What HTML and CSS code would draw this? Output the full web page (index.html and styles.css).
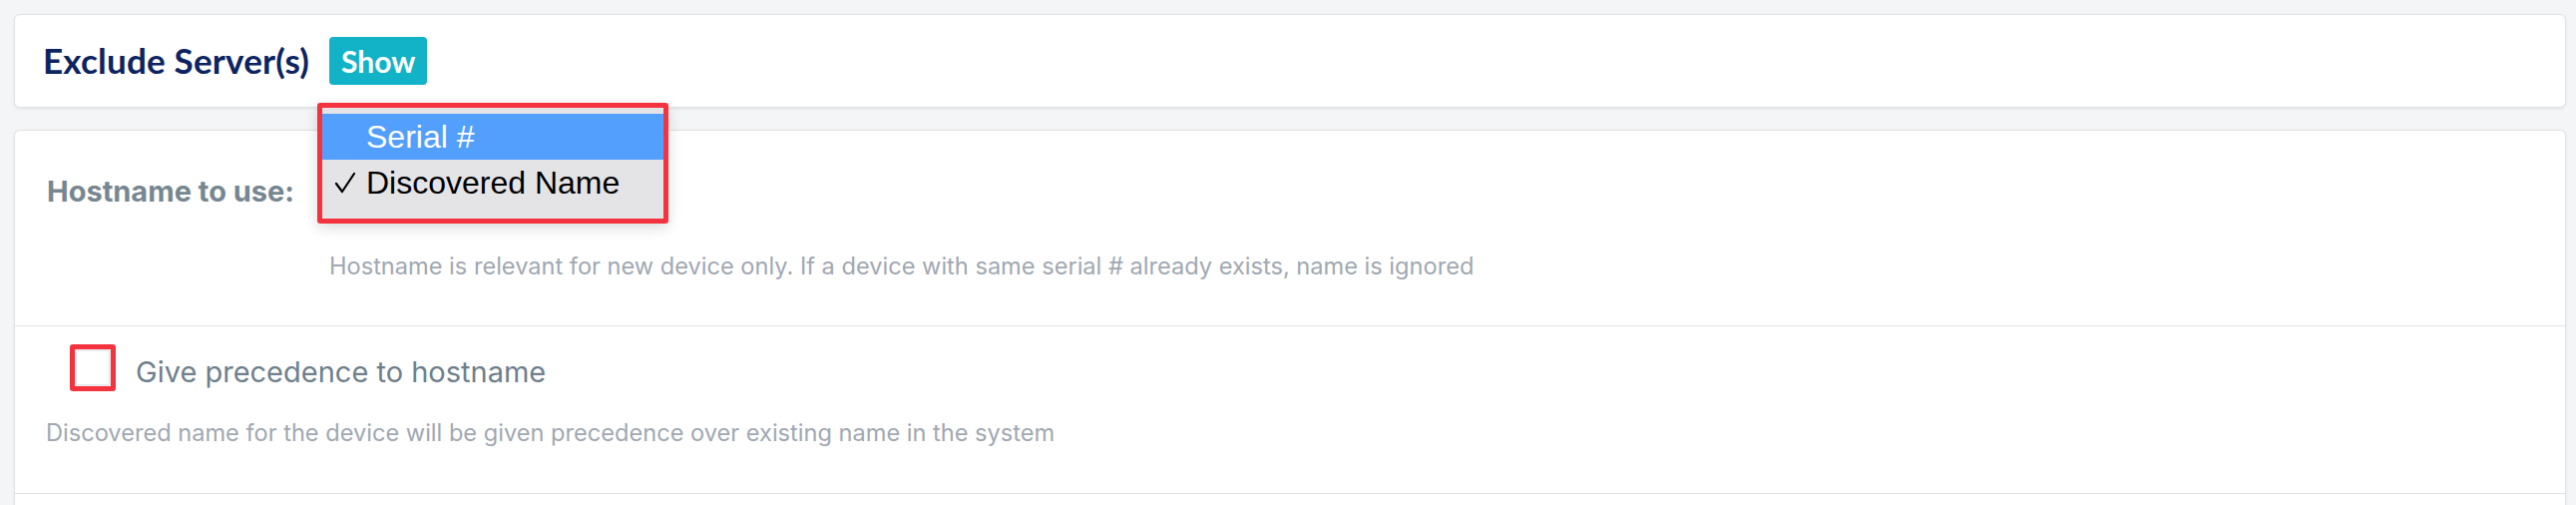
FILE: index.html
```html
<!DOCTYPE html>
<html lang="en">
<head>
<meta charset="utf-8">
<title>Exclude Server(s)</title>
<link rel="stylesheet" href="styles.css">
</head>
<body>
<div class="page">
  <section class="card card-head">
    <h2 class="title">Exclude Server(s)</h2>
    <span class="badge">Show</span>
  </section>
  <section class="card card-body">
    <div class="row row-host">
      <label class="label">Hostname to use:</label>
      <div class="field">
        <div class="select-wrap">
          <div class="select"></div>
          <ul class="menu">
            <li class="opt active"><span class="chk"></span><span>Serial #</span></li>
            <li class="opt"><span class="chk"><svg width="22" height="22" viewBox="0 0 22 22"><polyline points="2,12 8,20 20,2" fill="none" stroke="#000" stroke-width="2.2" stroke-linejoin="round" stroke-linecap="round"/></svg></span><span>Discovered Name</span></li>
          </ul>
        </div>
        <p class="help">Hostname is relevant for new device only. If a device with same serial # already exists, name is ignored</p>
      </div>
    </div>
    <div class="row row-check">
      <label class="check"><span class="box"></span><span class="check-text">Give precedence to hostname</span></label>
      <p class="desc">Discovered name for the device will be given precedence over existing name in the system</p>
    </div>
    <div class="row row-empty"></div>
  </section>
</div>
</body>
</html>
```
FILE: styles.css
```css
html, body { margin: 0; padding: 0; }
body {
  background: #f4f5f7;
  font-family: Inter, "Liberation Sans", sans-serif;
  height: 506px;
  overflow: hidden;
}
.page { padding: 14px 10px 0 14px; }
.card {
  background: #fff;
  border: 1px solid #e0e2e6;
  border-radius: 6px;
  box-shadow: 0 1px 3px rgba(0,0,0,0.08);
}
.card-head {
  height: 92px;
  box-sizing: content-box;
  display: flex;
  align-items: center;
  padding-left: 28px;
  gap: 20px;
}
.title {
  margin: 0 0 2px;
  font-family: Lato, "Liberation Sans", sans-serif;
  font-size: 35px;
  line-height: 42px;
  font-weight: 700;
  letter-spacing: 0.2px;
  color: #0c2462;
}
.badge {
  font-family: Lato, "Liberation Sans", sans-serif;
  background: #12b3c7;
  color: #fff;
  font-weight: 700;
  font-size: 30px;
  line-height: 48px;
  height: 48px;
  padding: 0 12px;
  border-radius: 4px;
}
.card-body { margin-top: 22px; }
.row + .row { border-top: 1px solid #dee2e6; }
.row-host {
  display: grid;
  grid-template-columns: 283px 1fr;
  padding-left: 32px;
  padding-bottom: 44px;
}
.label {
  margin-top: 43px;
  font-size: 29px;
  line-height: 36px;
  font-weight: 700;
  color: #778791;
}
.select-wrap { position: relative; margin-top: 40px; height: 42px; }
.menu {
  position: absolute;
  left: -12px;
  top: -68px;
  width: 342px;
  margin: 0;
  padding: 6px 0 13px;
  list-style: none;
  background: #e4e4e6;
  border: 5px solid #f5333f;
  border-radius: 3px;
  box-shadow: 0 4px 14px rgba(0,0,0,0.15);
  font-family: "Liberation Sans", Arial, sans-serif;
  font-size: 32px;
  line-height: 46px;
  color: #000;
}
.opt { display: flex; padding-left: 12px; height: 46px; }
.opt.active { background: #539ffd; color: #fff; }
.chk { width: 32px; display: flex; align-items: center; }
.help, .desc {
  margin: 0;
  font-size: 23.6px;
  line-height: 30px;
  color: #a1a8b2;
}
.help { margin-top: 39px; }
.row-check { padding: 18px 0 45px 31px; }
.check { display: flex; align-items: flex-start; gap: 20px; padding-left: 24px; }
.box {
  width: 46px;
  height: 47px;
  box-sizing: border-box;
  border: 5px solid #f5333f;
  border-radius: 3px;
  box-shadow: inset 0 0 0 2px #e9e9ec;
  background: #fff;
}
.check-text {
  margin-top: 4px;
  font-size: 29px;
  line-height: 47px;
  color: #6f7f8b;
}
.desc { margin-top: 23px; }
.row-empty { height: 40px; }
```
